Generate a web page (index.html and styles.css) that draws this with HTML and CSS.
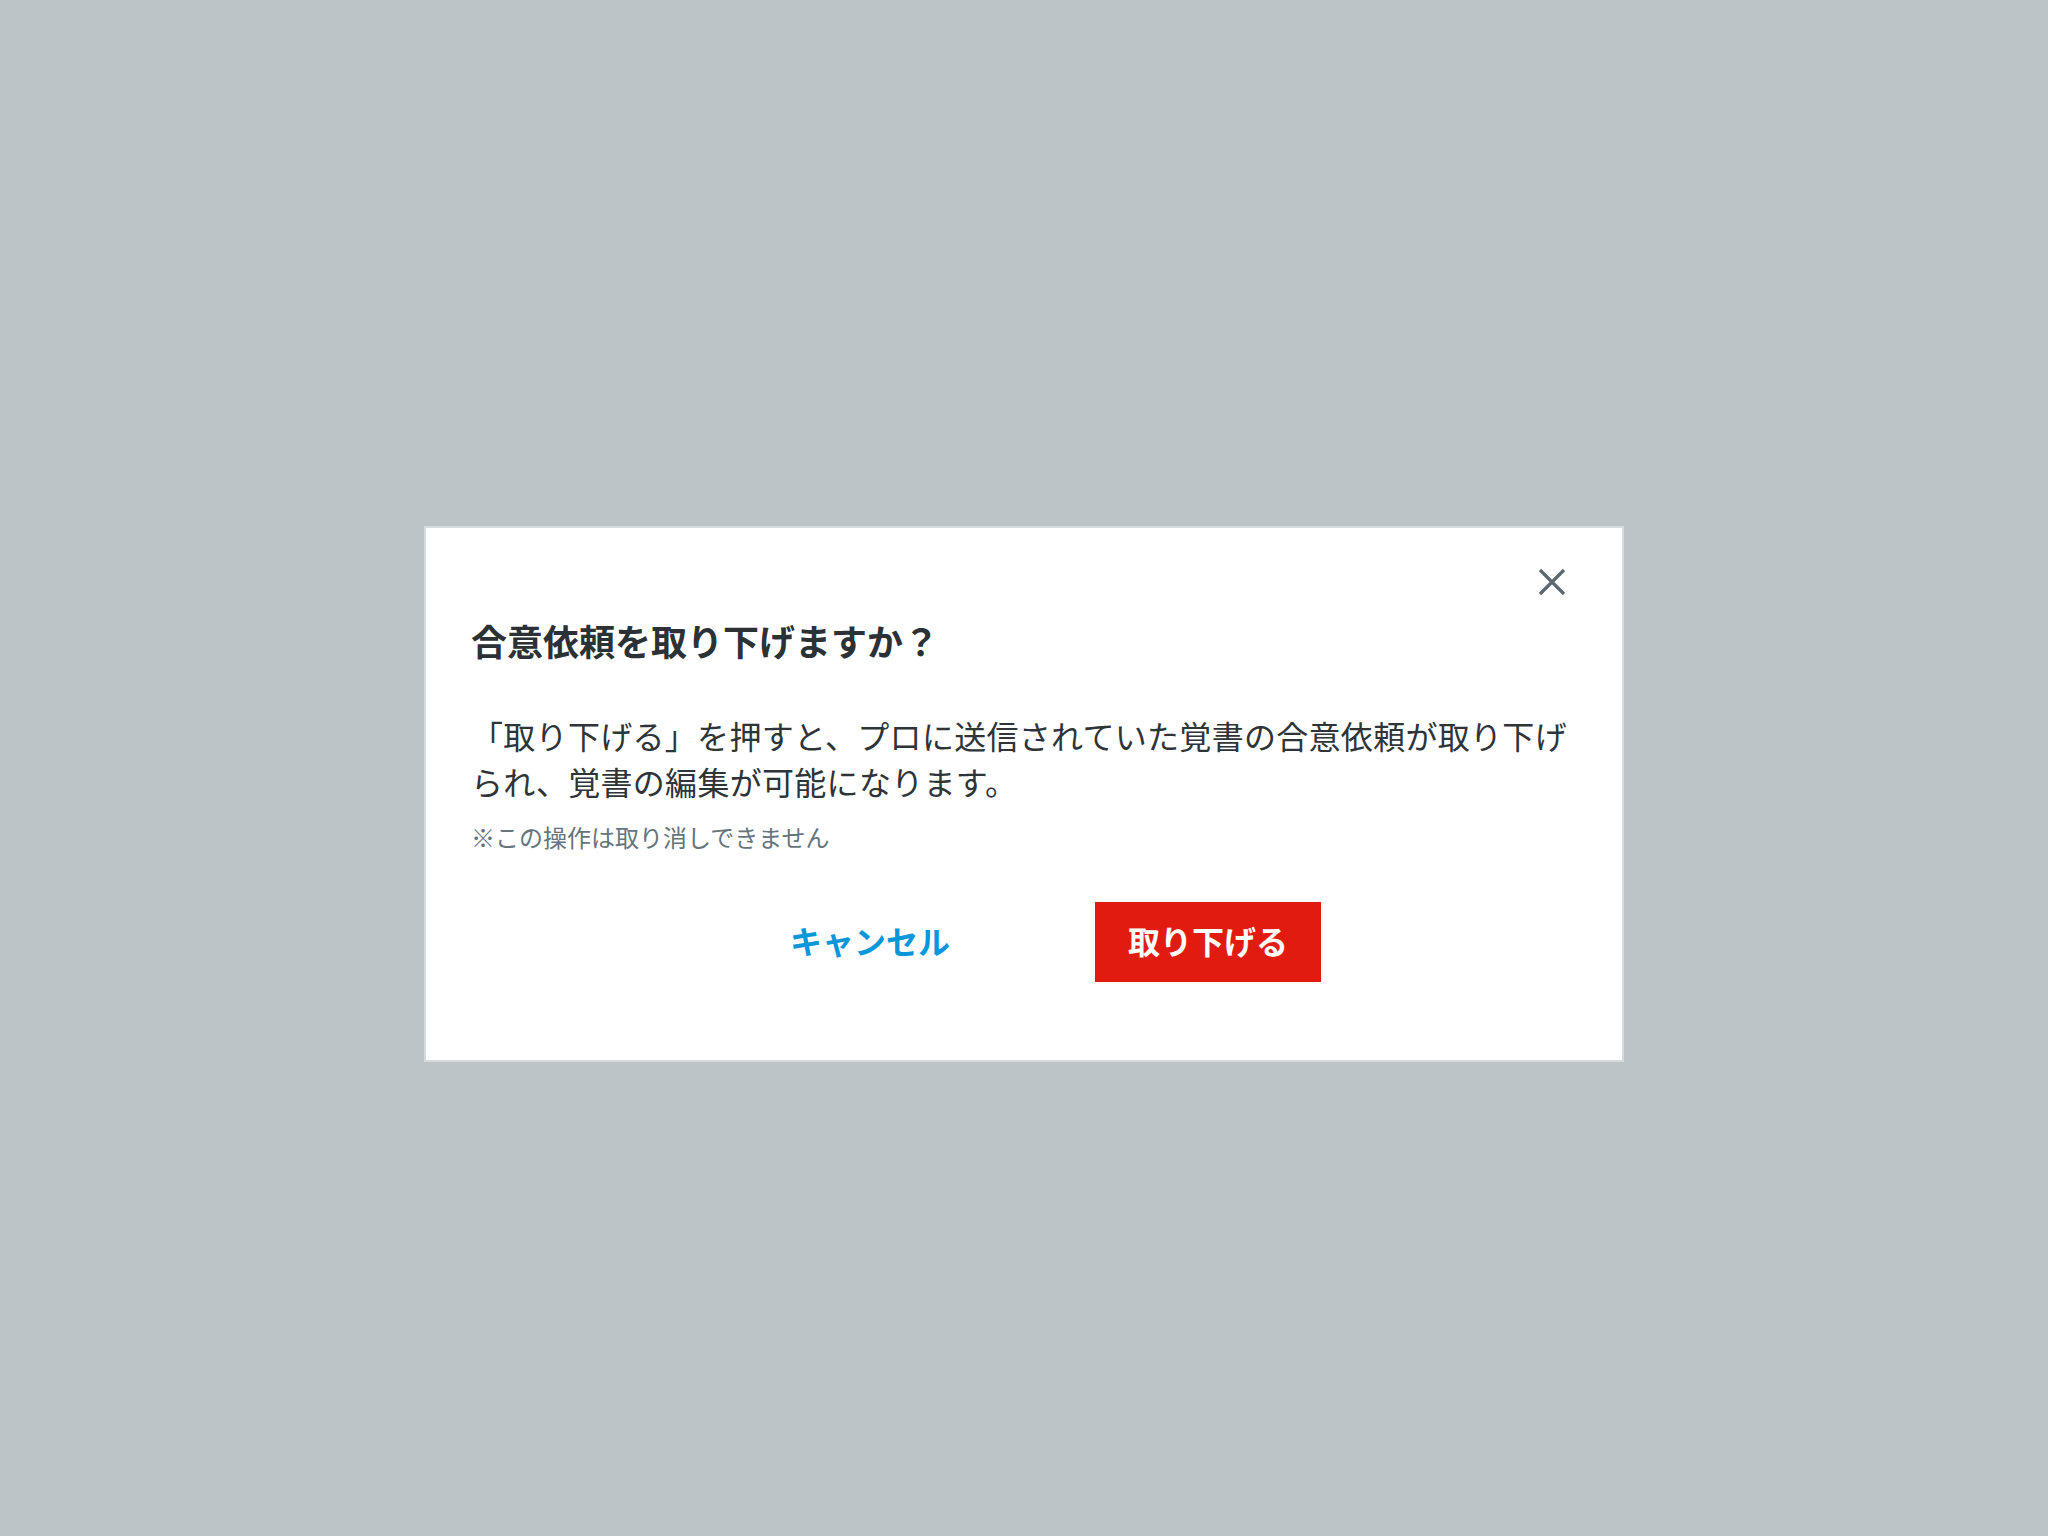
FILE: index.html
```html
<!DOCTYPE html>
<html lang="ja">
<head>
<meta charset="utf-8">
<title>合意依頼の取り下げ</title>
<link rel="stylesheet" href="styles.css">
</head>
<body>
<div class="overlay">
  <div class="dialog" role="dialog">
    <div class="dialog-close-row">
      <button class="close-btn" aria-label="閉じる">
        <svg width="28" height="28" viewBox="0 0 28 28"><path d="M2 2 L26 26 M26 2 L2 26" stroke="#5b6870" stroke-width="3.2" fill="none"/></svg>
      </button>
    </div>
    <h2 class="dialog-title">合意依頼を取り下げますか？</h2>
    <p class="dialog-body">「取り下げる」を押すと、プロに送信されていた覚書の合意依頼が取り下げられ、覚書の編集が可能になります。</p>
    <p class="dialog-note">※この操作は取り消しできません</p>
    <div class="dialog-actions">
      <button class="btn btn-cancel">キャンセル</button>
      <button class="btn btn-danger">取り下げる</button>
    </div>
  </div>
</div>
</body>
</html>
```

FILE: styles.css
```css
html, body {
  margin: 0;
  padding: 0;
}
body {
  background: #bcc4c7;
  width: 2048px;
  height: 1536px;
  font-family: "Noto Sans CJK JP", "Noto Sans", sans-serif;
  overflow: hidden;
}
.overlay {
  padding-top: 526px;
}
.dialog {
  box-sizing: border-box;
  width: 1200px;
  margin: 0 auto;
  background: #ffffff;
  border: 2px solid #d5dadd;
  padding: 40px 48px 78px 45px;
}
.dialog-close-row {
  display: flex;
  justify-content: flex-end;
  height: 28px;
  padding-right: 8px;
}
.close-btn {
  border: 0;
  background: none;
  padding: 0;
  width: 28px;
  height: 28px;
  display: block;
  cursor: pointer;
}
.close-btn svg {
  display: block;
}
.dialog-title {
  margin: 17px 0 0 0;
  font-size: 36px;
  line-height: 54px;
  font-weight: 700;
  color: #2b3135;
  letter-spacing: 0;
}
.dialog-body {
  margin: 45px 0 0 0;
  font-size: 32px;
  line-height: 46px;
  color: #2e3438;
  font-weight: 400;
  letter-spacing: 0.3px;
}
.dialog-note {
  margin: 16px 0 0 0;
  font-size: 24px;
  line-height: 34px;
  color: #66747c;
}
.dialog-actions {
  margin-top: 48px;
  display: flex;
  justify-content: center;
  gap: 112px;
  padding-left: 33px;
}
.btn {
  box-sizing: border-box;
  width: 226px;
  height: 80px;
  border: 0;
  padding: 0 0 4px 0;
  font-family: inherit;
  font-size: 32px;
  font-weight: 700;
  line-height: 76px;
  cursor: pointer;
}
.btn-cancel {
  background: transparent;
  color: #0a97d9;
}
.btn-danger {
  background: #e21b10;
  color: #ffffff;
}
```
